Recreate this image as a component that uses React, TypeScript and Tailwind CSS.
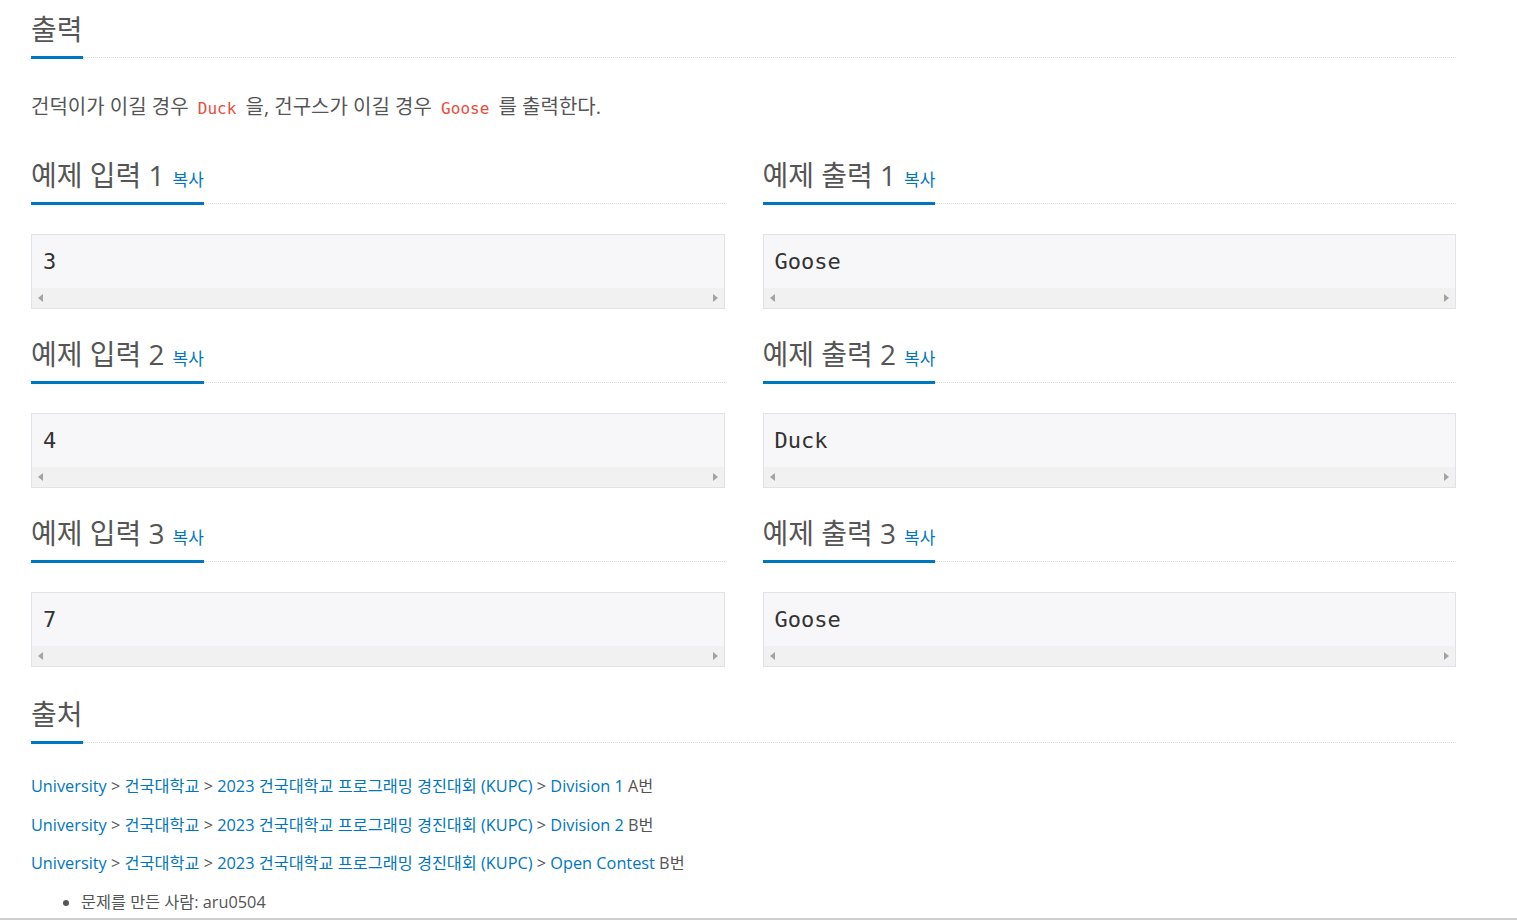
const font = "font-['Open_Sans','Noto_Sans_CJK_KR',sans-serif]"

function Headline({ title, copy }: { title: string; copy?: boolean }) {
  return (
    <div className="border-b border-dotted border-[#dcdcdc]">
      <h2 className="-mb-[2px] inline-block border-b-[3px] border-[#0076c0] pb-[9px] text-[28px] font-normal leading-[36px] text-[#555]">
        {title}
        {copy && (
          <a className="ml-[8px] cursor-pointer align-baseline text-[17px] leading-none text-[#0076c0]">
            복사
          </a>
        )}
      </h2>
    </div>
  )
}

function Arrow({ dir }: { dir: 'left' | 'right' }) {
  return (
    <svg width="5" height="8" viewBox="0 0 5 8">
      {dir === 'left' ? (
        <polygon points="5,0 5,8 0,4" fill="#a3a3a3" />
      ) : (
        <polygon points="0,0 0,8 5,4" fill="#a3a3a3" />
      )}
    </svg>
  )
}

function Sample({ title, data }: { title: string; data: string }) {
  return (
    <section>
      <Headline title={title} copy />
      <div className="mt-[30px] border border-[#e1e1e8] bg-[#f7f7f9]">
        <div className="flex h-[53px] items-center px-[11px] font-['DejaVu_Sans_Mono',monospace] text-[22px] text-[#333]">
          {data}
        </div>
        <div className="flex h-[20px] items-center justify-between bg-[#f1f1f1] px-[6px]">
          <Arrow dir="left" />
          <Arrow dir="right" />
        </div>
      </div>
    </section>
  )
}

const samples = [
  { input: '3', output: 'Goose' },
  { input: '4', output: 'Duck' },
  { input: '7', output: 'Goose' },
]

const sources = ['Division 1', 'Division 2', 'Open Contest']
const suffix = ['A번', 'B번', 'B번']

export default function App() {
  return (
    <div className={`${font} min-h-[921px] bg-white`}>
      <div className="w-[1456px] pl-[31px] pt-[11px]">
        <Headline title="출력" />
        <p className="mt-[35px] text-[20px] leading-[28px] text-[#555]">
          건덕이가 이길 경우{' '}
          <code className="px-[4px] font-['DejaVu_Sans_Mono',monospace] text-[16px] text-[#e74c3c]">
            Duck
          </code>{' '}
          을, 건구스가 이길 경우{' '}
          <code className="px-[4px] font-['DejaVu_Sans_Mono',monospace] text-[16px] text-[#e74c3c]">
            Goose
          </code>{' '}
          를 출력한다.
        </p>

        <div className="mt-[34px] grid grid-cols-2 gap-x-[38px] gap-y-[27px]">
          {samples.map((s, i) => (
            <>
              <Sample key={`in${i}`} title={`예제 입력 ${i + 1}`} data={s.input} />
              <Sample key={`out${i}`} title={`예제 출력 ${i + 1}`} data={s.output} />
            </>
          ))}
        </div>

        <div className="mt-[29px]">
          <Headline title="출처" />
        </div>

        <div className="mt-[31px] flex flex-col gap-[14.5px] text-[16.3px] leading-[24px] text-[#555]">
          {sources.map((src, i) => (
            <p key={src}>
              <a className="text-[#0076c0]">University</a> &gt;{' '}
              <a className="text-[#0076c0]">건국대학교</a> &gt;{' '}
              <a className="text-[#0076c0]">2023 건국대학교 프로그래밍 경진대회 (KUPC)</a> &gt;{' '}
              <a className="text-[#0076c0]">{src}</a> {suffix[i]}
            </p>
          ))}
        </div>

        <ul className="mt-[15px] list-disc pl-[50px] text-[16.3px] leading-[24px] text-[#555]">
          <li>문제를 만든 사람: aru0504</li>
        </ul>
      </div>
      <div className="mt-[4px] border-t-2 border-[#cfcfcf]" />
    </div>
  )
}
